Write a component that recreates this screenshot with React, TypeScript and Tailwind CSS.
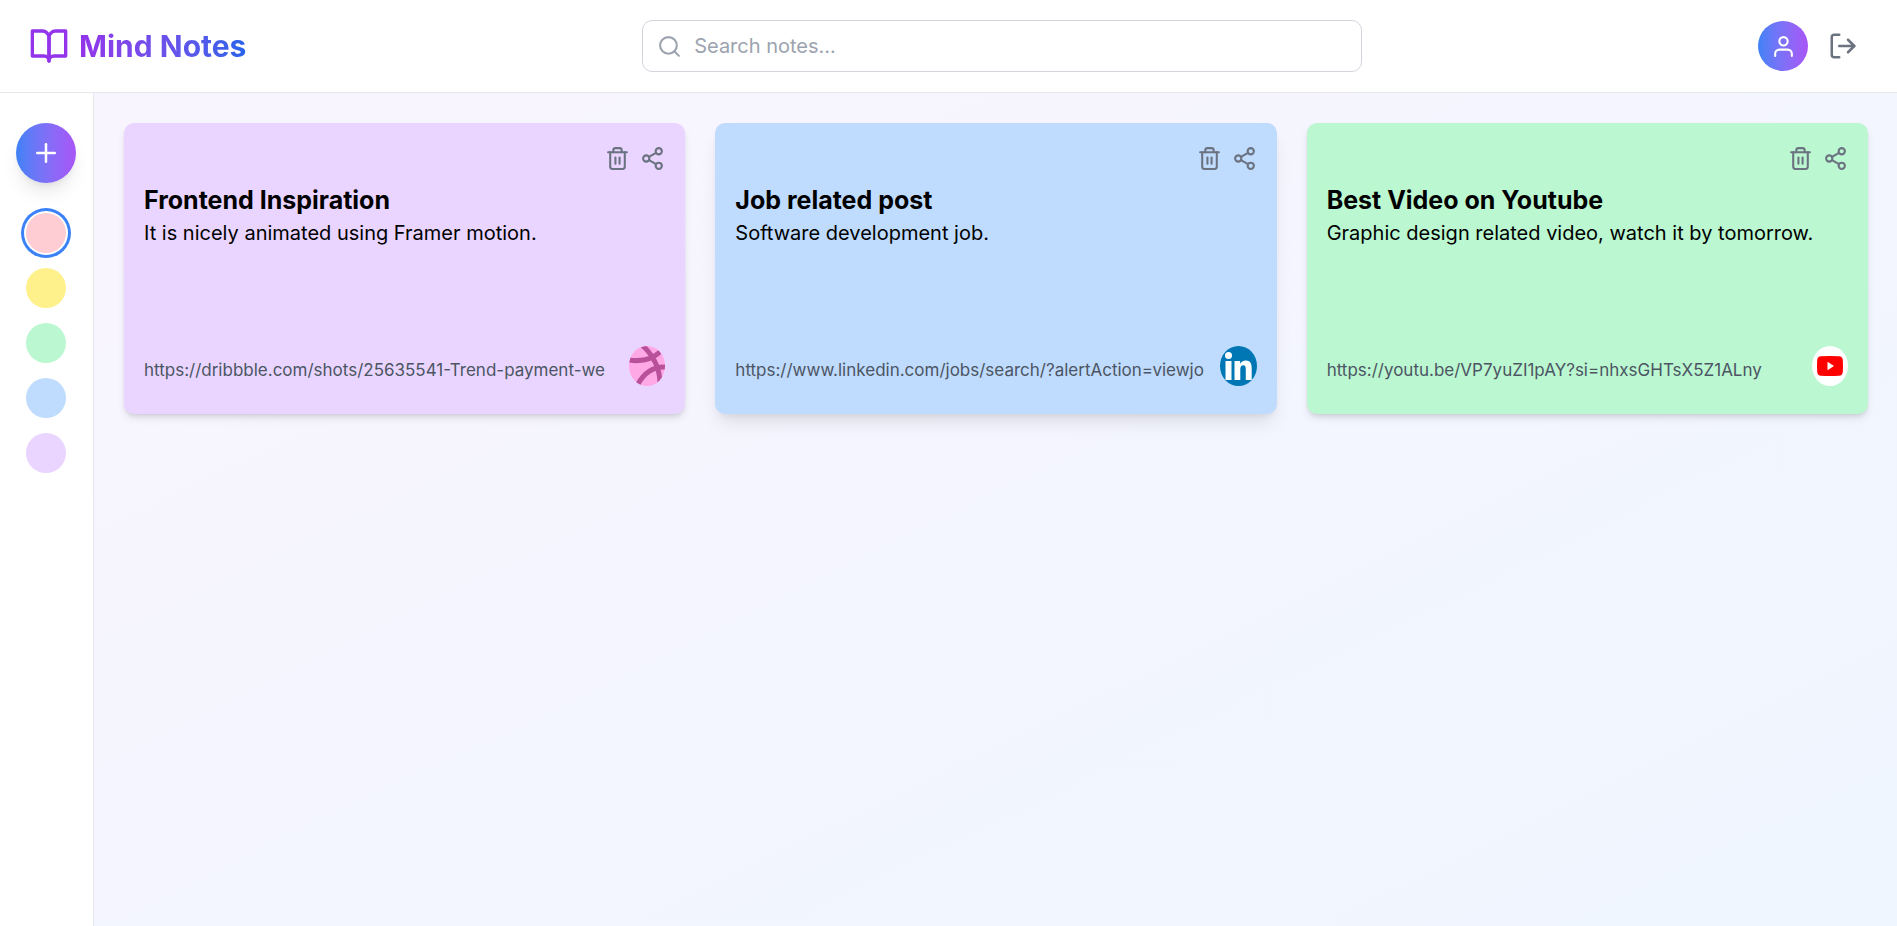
import { useState } from "react";
import type { ReactNode } from "react";
import { FiBookOpen, FiLogOut, FiPlus, FiSearch, FiShare2, FiTrash2, FiUser } from "react-icons/fi";

type Note = {
  title: string;
  text: string;
  url: string;
  card: string;
  logo: ReactNode;
};

function DribbbleLogo() {
  return (
    <svg viewBox="0 0 36 40" className="h-10 w-9 shrink-0" role="img" aria-label="Dribbble">
      <clipPath id="dribbble-disc">
        <ellipse cx="18" cy="20" rx="18" ry="20" />
      </clipPath>
      <g clipPath="url(#dribbble-disc)">
        <rect width="36" height="40" fill="#ffa8e6" />
        <g fill="none" stroke="#b8509a" strokeWidth="5">
          <path d="M0 14C13 16 24 13 32 5" />
          <path d="M13 -1C25 10 31 22 31 38" />
          <path d="M9 38C15 27 25 20 38 21" />
        </g>
      </g>
    </svg>
  );
}

function LinkedInLogo() {
  return (
    <svg viewBox="0 0 37 40" className="h-10 w-[37px] shrink-0" role="img" aria-label="LinkedIn">
      <ellipse cx="18.5" cy="20" rx="18.5" ry="20" fill="#0077b5" />
      <g fill="#fff">
        <circle cx="8.5" cy="9.5" r="3.5" />
        <path d="M5.5 15h6v19h-6z" />
        <path d="M14.500 15h5.600v2.700c1-1.900 3-3.200 5.700-3.200 4.700 0 5.900 3.200 5.900 8v11.500h-5.900V23.800c0-2.500-.3-4.500-2.500-4.500s-3 1.800-3 4.300V34h-5.800z" />
      </g>
    </svg>
  );
}

function YouTubeLogo() {
  return (
    <svg viewBox="0 0 36 40" className="h-10 w-9 shrink-0" role="img" aria-label="YouTube">
      <ellipse cx="18" cy="20" rx="18" ry="20" fill="#fff" />
      <path d="M9 10.300Q18 9.500 27 10.300Q30.500 10.500 30.800 14Q31.200 20 30.800 26Q30.500 29.500 27 29.700Q18 30.500 9 29.700Q5.500 29.500 5.200 26Q4.800 20 5.200 14Q5.500 10.500 9 10.300Z" fill="#f00" />
      <path d="M15.500 15.700v8.600l6.500-4.300z" fill="#fff" />
    </svg>
  );
}

const notes: Note[] = [
  {
    title: "Frontend Inspiration",
    text: "It is nicely animated using Framer motion.",
    url: "https://dribbble.com/shots/25635541-Trend-payment-we",
    card: "bg-[#e9d5ff] shadow-[0_5px_8px_-1px_rgb(0_0_0/0.1),0_3px_5px_-2px_rgb(0_0_0/0.1)]",
    logo: <DribbbleLogo />,
  },
  {
    title: "Job related post",
    text: "Software development job.",
    url: "https://www.linkedin.com/jobs/search/?alertAction=viewjo",
    card: "bg-[#bfdbfe] shadow-[0_12px_19px_-4px_rgb(0_0_0/0.1),0_5px_8px_-5px_rgb(0_0_0/0.1)]",
    logo: <LinkedInLogo />,
  },
  {
    title: "Best Video on Youtube",
    text: "Graphic design related video, watch it by tomorrow.",
    url: "https://youtu.be/VP7yuZI1pAY?si=nhxsGHTsX5Z1ALny",
    card: "bg-[#bbf7d0] shadow-[0_5px_8px_-1px_rgb(0_0_0/0.1),0_3px_5px_-2px_rgb(0_0_0/0.1)]",
    logo: <YouTubeLogo />,
  },
];

const swatches = [
  { name: "Pink", fill: "bg-[#fecdd3]" },
  { name: "Yellow", fill: "bg-[#fef08a]" },
  { name: "Green", fill: "bg-[#bbf7d0]" },
  { name: "Blue", fill: "bg-[#bfdbfe]" },
  { name: "Purple", fill: "bg-[#e9d5ff]" },
];

function NoteCard({ note }: { note: Note }) {
  return (
    <article className={`flex h-[291px] min-w-0 flex-col rounded-[10px] p-5 ${note.card}`}>
      <div className="flex justify-end gap-[10px] text-[#6b7280]">
        <button type="button" aria-label="Delete note" className="py-[3px]">
          <FiTrash2 size={25} />
        </button>
        <button type="button" aria-label="Share note" className="py-[3px]">
          <FiShare2 size={25} />
        </button>
      </div>
      <h2 className="mt-[11px] text-[25px] leading-[30px] font-bold">{note.title}</h2>
      <p className="mt-[3px] text-xl leading-[30px]">{note.text}</p>
      <div className="mt-auto flex items-center gap-[10px] pb-2">
        <a href={note.url} className="min-w-0 flex-1 overflow-hidden pt-2 text-[17px] leading-[25px] whitespace-nowrap text-[#4b5563]">
          {note.url}
        </a>
        {note.logo}
      </div>
    </article>
  );
}

export default function App() {
  const [selected, setSelected] = useState("Pink");
  const [query, setQuery] = useState("");
  return (
    <div className="flex min-h-screen flex-col bg-gradient-to-br from-[#faf5ff] to-[#eff6ff] font-[Inter,sans-serif] text-black">
      <header className="flex items-center justify-between border-b border-[#e5e7eb] bg-white px-[29px] py-5">
        <div className="flex items-center gap-[10px]">
          <FiBookOpen size={40} className="text-[#9333ea]" />
          <h1 className="bg-gradient-to-r from-[#9333ea] to-[#2563eb] bg-clip-text text-[30px] leading-10 font-bold text-transparent">
            Mind Notes
          </h1>
        </div>
        <label className="flex h-[52px] w-full max-w-[720px] items-center gap-3 rounded-[10px] border border-[#d1d5db] px-[14px]">
          <FiSearch size={25} className="shrink-0 text-[#9ca3af]" />
          <input
            type="text"
            aria-label="Search notes"
            placeholder="Search notes..."
            value={query}
            onChange={(e) => setQuery(e.target.value)}
            className="min-w-0 flex-1 text-xl outline-none placeholder:text-[#9ca3af]"
          />
        </label>
        <div className="flex items-center gap-5 pr-[10px]">
          <button
            type="button"
            aria-label="Profile"
            className="flex size-[50px] items-center justify-center rounded-full bg-gradient-to-r from-[#3b82f6] to-[#a855f7] text-white"
          >
            <FiUser size={25} />
          </button>
          <button type="button" aria-label="Log out" className="text-[#6b7280]">
            <FiLogOut size={30} />
          </button>
        </div>
      </header>
      <div className="flex flex-1">
        <aside className="flex flex-col items-center border-r border-[#e5e7eb] bg-white py-[30px] pr-[17px] pl-4">
          <button
            type="button"
            aria-label="Add note"
            className="flex size-[60px] items-center justify-center rounded-full bg-gradient-to-r from-[#3b82f6] to-[#a855f7] text-white shadow-[0_12px_19px_-4px_rgb(0_0_0/0.1),0_5px_8px_-5px_rgb(0_0_0/0.1)]"
          >
            <FiPlus size={30} />
          </button>
          <div className="mt-[30px] flex flex-col gap-[15px]">
            {swatches.map((s) => (
              <button
                key={s.name}
                type="button"
                aria-label={s.name}
                aria-pressed={selected === s.name}
                onClick={() => setSelected(s.name)}
                className={`size-10 rounded-full ${s.fill} ${selected === s.name ? "ring-3 ring-[#3b82f6] ring-offset-2" : ""}`}
              />
            ))}
          </div>
        </aside>
        <main className="grid flex-1 grid-cols-3 content-start gap-[30px] py-[30px] pr-[29px] pl-[30px]">
          {notes.map((n) => (
            <NoteCard key={n.title} note={n} />
          ))}
        </main>
      </div>
    </div>
  );
}
